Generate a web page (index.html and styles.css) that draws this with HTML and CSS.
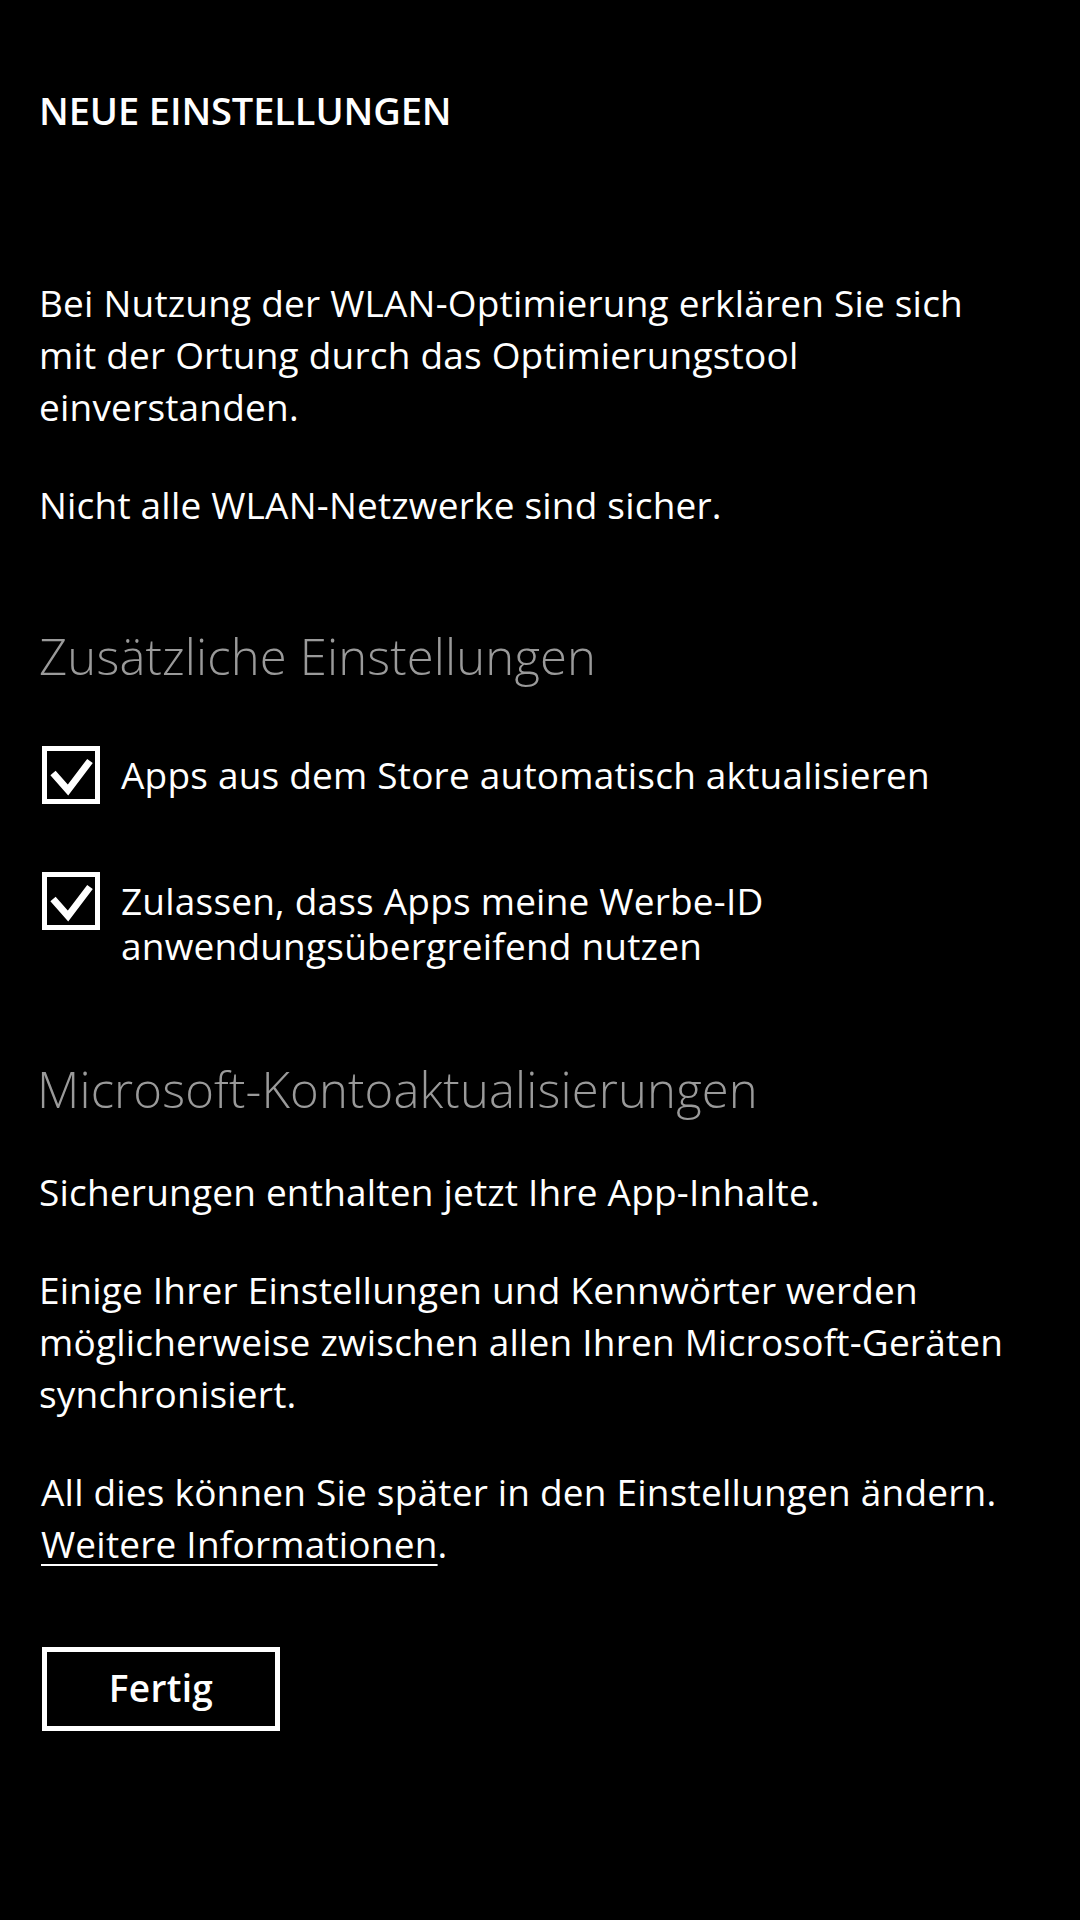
FILE: index.html
```html
<!DOCTYPE html>
<html lang="de">
<head>
<meta charset="utf-8">
<title>Neue Einstellungen</title>
<link rel="stylesheet" href="styles.css">
</head>
<body>
<main class="page">
  <h1 class="title">NEUE EINSTELLUNGEN</h1>

  <p class="text first">Bei Nutzung der WLAN-Optimierung erklären Sie sich mit der Ortung durch das Optimierungstool einverstanden.</p>
  <p class="text">Nicht alle WLAN-Netzwerke sind sicher.</p>

  <h2 class="section-heading sh-1">Zusätzliche Einstellungen</h2>

  <div class="check-row row-1">
    <svg class="check-box" viewBox="0 0 58 58" width="58" height="58" aria-hidden="true">
      <rect x="2.5" y="2.5" width="53" height="53" fill="none" stroke="#fff" stroke-width="5"/>
      <polyline points="11,27 26,44 48,15" fill="none" stroke="#fff" stroke-width="7" stroke-linejoin="miter"/>
    </svg>
    <span class="check-label">Apps aus dem Store automatisch aktualisieren</span>
  </div>

  <div class="check-row row-2">
    <svg class="check-box" viewBox="0 0 58 58" width="58" height="58" aria-hidden="true">
      <rect x="2.5" y="2.5" width="53" height="53" fill="none" stroke="#fff" stroke-width="5"/>
      <polyline points="11,27 26,44 48,15" fill="none" stroke="#fff" stroke-width="7" stroke-linejoin="miter"/>
    </svg>
    <span class="check-label">Zulassen, dass Apps meine Werbe-ID anwendungsübergreifend nutzen</span>
  </div>

  <h2 class="section-heading sh-2">Microsoft-Kontoaktualisierungen</h2>

  <p class="text after-heading">Sicherungen enthalten jetzt Ihre App-Inhalte.</p>
  <p class="text">Einige Ihrer Einstellungen und Kennwörter werden möglicherweise zwischen allen Ihren Microsoft-Geräten synchronisiert.</p>
  <p class="text shifted">All dies können Sie später in den Einstellungen ändern.<br><a class="link" href="#">Weitere Informationen</a>.</p>

  <button class="done-button" type="button">Fertig</button>
</main>
</body>
</html>
```

FILE: styles.css
```css
html, body {
  margin: 0;
  padding: 0;
  background: #000;
}

body {
  width: 1080px;
  min-height: 1920px;
  color: #fff;
  font-family: "Open Sans", "Noto Sans", "DejaVu Sans", sans-serif;
}

.page {
  display: flex;
  flex-direction: column;
  align-items: flex-start;
  padding: 84px 60px 0 39px;
}

.title {
  margin: 0;
  font-size: 38px;
  font-weight: 600;
  line-height: 52px;
  letter-spacing: -0.1px;
}

.text {
  margin: 46px 0 0;
  font-size: 37px;
  font-weight: 400;
  line-height: 52px;
  letter-spacing: 0.2px;
}

.text.first {
  margin-top: 141px;
}

.text.after-heading {
  margin-top: 45px;
}

.text.shifted {
  padding-left: 2px;
}

.section-heading {
  margin: 0;
  font-size: 49px;
  font-weight: 300;
  line-height: 64px;
  color: #9a9a9a;
  letter-spacing: 0.15px;
}

.sh-1 {
  margin-top: 93px;
}

.sh-2 {
  margin-top: 89px;
  margin-left: -2px;
}

.check-row {
  display: flex;
  align-items: flex-start;
  gap: 21px;
  margin-left: 3px;
}

.row-1 {
  margin-top: 58px;
}

.row-2 {
  margin-top: 68px;
}

.check-box {
  flex: none;
  display: block;
}

.check-label {
  padding-top: 6px;
  font-size: 37px;
  line-height: 45px;
  letter-spacing: 0.2px;
}

.link {
  color: #fff;
  text-decoration: underline;
  text-decoration-thickness: 2px;
  text-underline-offset: 6px;
}

.done-button {
  margin: 77px 0 0 3px;
  width: 238px;
  height: 84px;
  border: 5px solid #fff;
  background: #000;
  color: #fff;
  font-family: "Open Sans", "Noto Sans", sans-serif;
  font-size: 37px;
  font-weight: 600;
  letter-spacing: 0.3px;
  padding: 0 0 4px;
}
```
